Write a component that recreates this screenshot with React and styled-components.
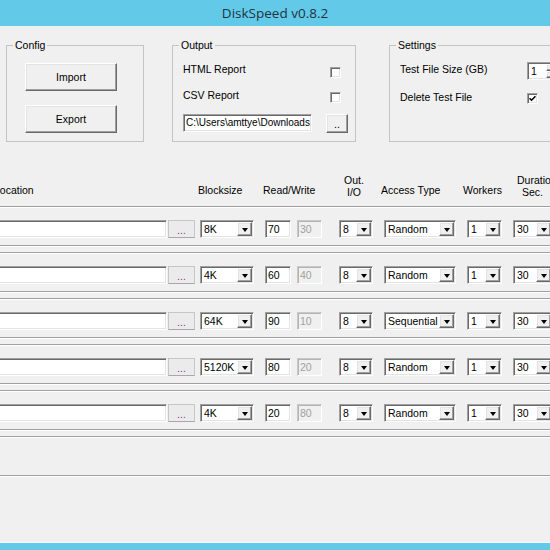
import React from 'react';
import styled, { createGlobalStyle } from 'styled-components';

const GlobalStyle = createGlobalStyle`
  html, body { margin: 0; padding: 0; width: 550px; height: 550px; overflow: hidden; background: #f0f0f0; }
  body { font-family: "Liberation Sans", Arial, sans-serif; font-size: 10.5px; color: #000; }
  * { box-sizing: border-box; }
`;

const Window = styled.div`
  width: 550px;
  height: 550px;
  display: flex;
  flex-direction: column;
  overflow: hidden;
  background: #f0f0f0;
`;

const TitleBar = styled.div`
  flex: none;
  height: 26px;
  background: #63c9e9;
  display: flex;
  align-items: center;
  justify-content: center;
  font-family: "Open Sans", "Noto Sans", sans-serif;
  font-size: 13.5px;
  color: #1f3440;
`;

const Body = styled.div`
  flex: 1;
  overflow: hidden;
  display: flex;
  flex-direction: column;
`;

const BottomBar = styled.div`
  flex: none;
  height: 8px;
  background: #63c9e9;
  border-top: 1px solid #f8f8f8;
`;

const TopRow = styled.div`
  display: flex;
  align-items: flex-start;
  margin-top: 19px;
  padding-left: 6px;
`;

const GroupBox = styled.div`
  position: relative;
  flex: none;
  width: ${p => p.$w}px;
  height: 97px;
  margin-left: ${p => p.$ml || 0}px;
  border: 1px solid #c4c4c4;
`;

const GroupTitle = styled.span`
  position: absolute;
  top: -8px;
  left: 6px;
  padding: 0 2px;
  background: #f0f0f0;
  line-height: 14px;
`;

const ConfigBody = styled.div`
  display: flex;
  flex-direction: column;
  gap: 14px;
  padding: 17px 0 0 18px;
`;

const raised = `
  border: 1px solid;
  border-color: #ffffff #696969 #696969 #ffffff;
  box-shadow: inset -1px -1px #a0a0a0, inset 1px 1px #e3e3e3;
  background: #f0f0f0;
`;

const sunken = `
  border: 1px solid;
  border-color: #a0a0a0 #ffffff #ffffff #a0a0a0;
  box-shadow: inset 1px 1px #696969, inset -1px -1px #e3e3e3;
`;

const WinButton = styled.button`
  ${raised}
  width: ${p => p.$w}px;
  height: ${p => p.$h}px;
  padding: 0;
  font-family: inherit;
  font-size: 10.5px;
  color: #000;
  line-height: ${p => p.$lh || 14}px;
`;

const PanelBody = styled.div`
  display: flex;
  flex-direction: column;
  gap: ${p => p.$gap}px;
  padding: 16px 0 0 10px;
`;

const OptionRow = styled.div`
  display: grid;
  grid-template-columns: ${p => p.$label}px auto;
  height: 18px;
  align-items: start;
`;

const OptionLabel = styled.span`
  line-height: 14px;
  white-space: nowrap;
`;

const CheckBox = styled.span`
  ${sunken}
  display: flex;
  align-items: center;
  justify-content: center;
  width: 11px;
  height: 11px;
  margin-top: ${p => p.$mt}px;
  background: #ffffff;
`;

const PathRow = styled.div`
  display: flex;
  align-items: flex-start;
  gap: 14px;
`;

const TextField = styled.div`
  ${sunken}
  flex: none;
  width: ${p => p.$w}px;
  height: 18px;
  padding: 0 2px;
  background: ${p => (p.$disabled ? '#f0f0f0' : '#ffffff')};
  color: ${p => (p.$disabled ? '#a0a0a0' : '#000')};
  font-size: ${p => p.$fs || 10.5}px;
  line-height: 16px;
  white-space: nowrap;
  overflow: hidden;
  ${p => p.$disabled && `
    border-color: #c8c8c8 #ffffff #ffffff #c8c8c8;
    box-shadow: inset 1px 1px #b4b4b4;
  `}
`;

const SpinBox = styled.div`
  ${sunken}
  display: flex;
  width: 36px;
  height: 18px;
  padding: 1px;
  background: #ffffff;
`;

const SpinValue = styled.span`
  flex: 1;
  padding-left: 2px;
  line-height: 14px;
`;

const SpinButtons = styled.span`
  display: flex;
  flex-direction: column;
  width: 15px;
`;

const SpinPart = styled.span`
  ${raised}
  flex: 1;
`;

const HeaderRow = styled.div`
  display: grid;
  grid-template-columns: ${p => p.$cols};
  height: 24px;
  margin: 32px 0 0 -40px;
  align-items: start;
`;

const HeaderLabel = styled.div`
  line-height: 12px;
  white-space: nowrap;
  margin-left: ${p => p.$dx || 0}px;
  margin-top: ${p => p.$dy || 0}px;
  width: ${p => (p.$w ? `${p.$w}px` : 'auto')};
  text-align: ${p => p.$align || 'left'};
`;

const HeaderLine = styled.span`
  display: block;
  padding-left: ${p => p.$indent || 0}px;
`;

const RowsArea = styled.div`
  display: flex;
  flex-direction: column;
  gap: 6px;
  margin: 8px -50px 0 -41px;
`;

const RowBox = styled.div`
  display: grid;
  grid-template-columns: ${p => p.$cols};
  align-content: start;
  align-items: start;
  height: 40px;
  padding-top: 13px;
  border: 1px solid #a0a0a0;
  box-shadow: inset 1px 1px #ffffff, 0 1px #ffffff;
`;

const BrowseButton = styled.button`
  width: 27px;
  height: 18px;
  padding: 0;
  border: 1px solid #c6c6c6;
  border-bottom-color: #a8a8a8;
  background: #ebebeb;
  color: #8a3b8f;
  font-family: inherit;
  font-size: 10.5px;
  line-height: 18px;
`;

const Combo = styled.div`
  ${sunken}
  display: flex;
  width: ${p => p.$w}px;
  height: 18px;
  padding: 1px;
  background: #ffffff;
`;

const ComboValue = styled.span`
  flex: 1;
  padding-left: 2px;
  line-height: 14px;
  white-space: nowrap;
  overflow: hidden;
`;

const ComboArrow = styled.span`
  ${raised}
  flex: none;
  width: 15px;
  display: flex;
  align-items: center;
  justify-content: center;
  &::after {
    content: '';
    border-left: 3.5px solid transparent;
    border-right: 3.5px solid transparent;
    border-top: 4px solid #000;
    margin-top: 1px;
  }
`;

const COLS = '208px 32px 65px 32px 42px 45px 83px 46px 47px';

const rows = [
  { bs: '8K', r: 70, w: 30, io: 8, at: 'Random', wk: 1, d: 30 },
  { bs: '4K', r: 60, w: 40, io: 8, at: 'Random', wk: 1, d: 30 },
  { bs: '64K', r: 90, w: 10, io: 8, at: 'Sequential', wk: 1, d: 30 },
  { bs: '5120K', r: 80, w: 20, io: 8, at: 'Random', wk: 1, d: 30 },
  { bs: '4K', r: 20, w: 80, io: 8, at: 'Random', wk: 1, d: 30 },
];

const ComboBox = ({ w, value }) => (
  <Combo $w={w}>
    <ComboValue>{value}</ComboValue>
    <ComboArrow />
  </Combo>
);

const Check = () => (
  <svg width="7" height="7" viewBox="0 0 7 7">
    <path d="M0.5 3.2 L2.5 5.2 L6.5 1.2" fill="none" stroke="#000" strokeWidth="1.6" />
  </svg>
);

export default function App() {
  return (
    <Window>
      <GlobalStyle />
      <TitleBar>DiskSpeed v0.8.2</TitleBar>
      <Body>
        <TopRow>
          <GroupBox $w={138}>
            <GroupTitle>Config</GroupTitle>
            <ConfigBody>
              <WinButton $w={92} $h={28}>Import</WinButton>
              <WinButton $w={92} $h={28}>Export</WinButton>
            </ConfigBody>
          </GroupBox>
          <GroupBox $w={184} $ml={28}>
            <GroupTitle>Output</GroupTitle>
            <PanelBody $gap={8}>
              <OptionRow $label={147}>
                <OptionLabel>HTML Report</OptionLabel>
                <CheckBox $mt={5} />
              </OptionRow>
              <OptionRow $label={147}>
                <OptionLabel>CSV Report</OptionLabel>
                <CheckBox $mt={4} />
              </OptionRow>
              <PathRow>
                <TextField $w={129} $fs={10}>C:\Users\amttye\Downloads</TextField>
                <WinButton $w={22} $h={19} $lh={12}>..</WinButton>
              </PathRow>
            </PanelBody>
          </GroupBox>
          <GroupBox $w={200} $ml={33}>
            <GroupTitle>Settings</GroupTitle>
            <PanelBody $gap={10}>
              <OptionRow $label={127}>
                <OptionLabel>Test File Size (GB)</OptionLabel>
                <SpinBox>
                  <SpinValue>1</SpinValue>
                  <SpinButtons>
                    <SpinPart />
                    <SpinPart />
                  </SpinButtons>
                </SpinBox>
              </OptionRow>
              <OptionRow $label={127}>
                <OptionLabel>Delete Test File</OptionLabel>
                <CheckBox $mt={3}>
                  <Check />
                </CheckBox>
              </OptionRow>
            </PanelBody>
          </GroupBox>
        </TopRow>

        <HeaderRow $cols={COLS}>
          <HeaderLabel $dx={34} $dy={10}>Location</HeaderLabel>
          <span />
          <HeaderLabel $dx={-2} $dy={10}>Blocksize</HeaderLabel>
          <HeaderLabel $dx={-2} $dy={10}>Read/Write</HeaderLabel>
          <span />
          <HeaderLabel $w={30} $align="center">
            <HeaderLine>Out.</HeaderLine>
            <HeaderLine>I/O</HeaderLine>
          </HeaderLabel>
          <HeaderLabel $dx={-3} $dy={10}>Access Type</HeaderLabel>
          <HeaderLabel $dx={-4} $dy={10}>Workers</HeaderLabel>
          <HeaderLabel $dx={4}>
            <HeaderLine>Duration</HeaderLine>
            <HeaderLine $indent={5}>Sec.</HeaderLine>
          </HeaderLabel>
        </HeaderRow>

        <RowsArea>
          {rows.map((r, i) => (
            <RowBox key={i} $cols={COLS}>
              <TextField $w={207} />
              <BrowseButton>...</BrowseButton>
              <ComboBox w={54} value={r.bs} />
              <TextField $w={26}>{r.r}</TextField>
              <TextField $w={25} $disabled>{r.w}</TextField>
              <ComboBox w={34} value={r.io} />
              <ComboBox w={72} value={r.at} />
              <ComboBox w={35} value={r.wk} />
              <ComboBox w={40} value={r.d} />
            </RowBox>
          ))}
          <RowBox $cols={COLS} />
        </RowsArea>
      </Body>
      <BottomBar />
    </Window>
  );
}
